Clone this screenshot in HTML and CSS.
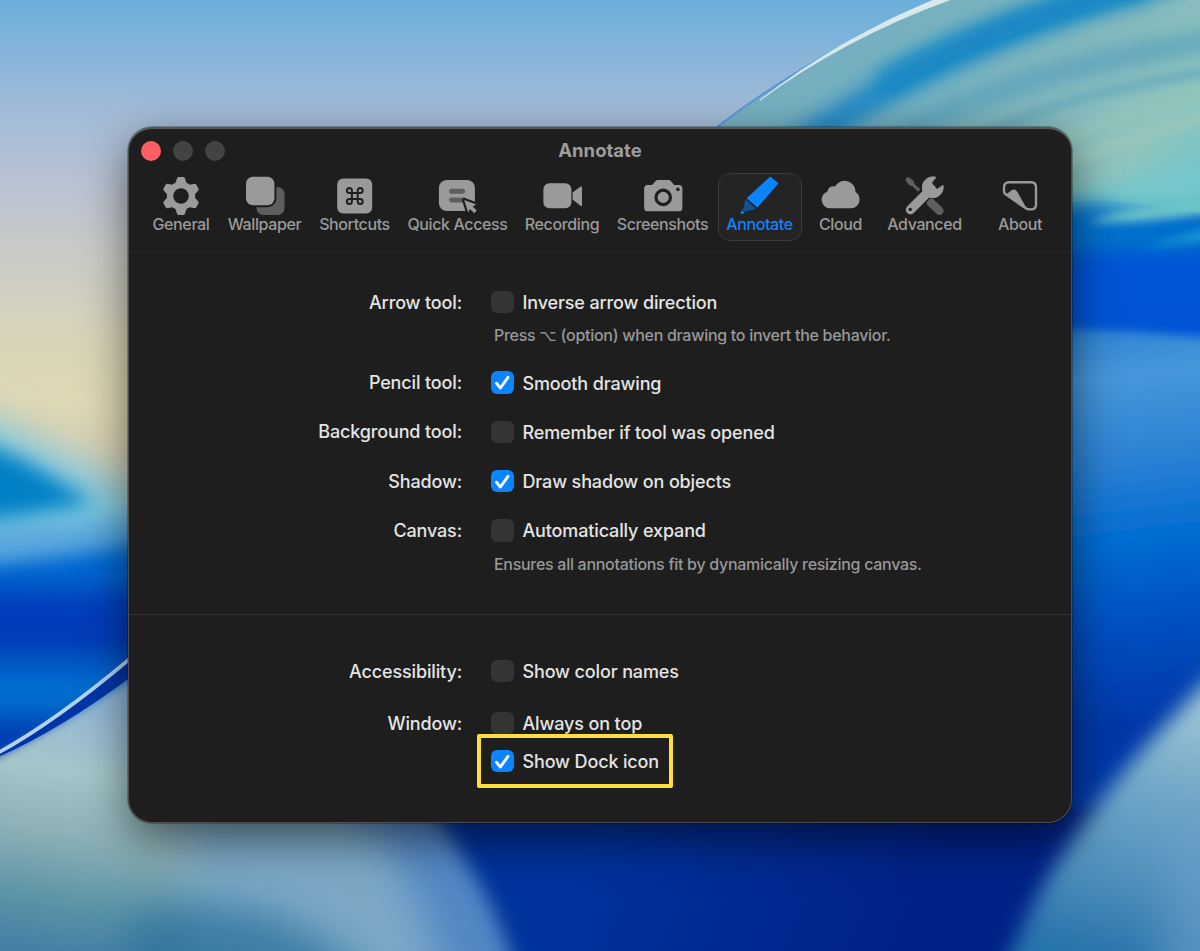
FILE: index.html
```html
<!DOCTYPE html>
<html lang="en">

    <head>
        <meta charset="UTF-8" />
        <meta name="viewport" content="width=device-width, initial-scale=1.0" />
        <title>Annotate</title>
        <link rel="stylesheet" href="styles.css">
    </head>

    <body>

        <svg class="wallpaper" viewBox="0 0 1200 951" preserveAspectRatio="none">
            <defs>
                <linearGradient id="sky" x1="0" y1="0" x2="0" y2="1">
                    <stop offset="0" stop-color="#6bafda" />
                    <stop offset="0.05" stop-color="#84b4da" />
                    <stop offset="0.12" stop-color="#a3bbd7" />
                    <stop offset="0.19" stop-color="#b8c2d2" />
                    <stop offset="0.26" stop-color="#c9cac9" />
                    <stop offset="0.36" stop-color="#d9d4b8" />
                    <stop offset="0.42" stop-color="#dfd8b4" />
                    <stop offset="0.5" stop-color="#d8cdb2" />
                    <stop offset="1" stop-color="#d8cdb2" />
                </linearGradient>
                <linearGradient id="leftBlue" gradientUnits="userSpaceOnUse" x1="0" y1="530" x2="0" y2="750">
                    <stop offset="0.2" stop-color="#0068d2" />
                    <stop offset="0.33" stop-color="#003cba" />
                    <stop offset="0.42" stop-color="#003fbe" />
                    <stop offset="0.5" stop-color="#0038b4" />
                    <stop offset="0.62" stop-color="#005cc8" />
                    <stop offset="0.76" stop-color="#0074d0" />
                    <stop offset="0.9" stop-color="#0044b8" />
                    <stop offset="1" stop-color="#0034a8" />
                </linearGradient>
                <linearGradient id="leftFloor" gradientUnits="userSpaceOnUse" x1="70" y1="690" x2="30" y2="951">
                    <stop offset="0" stop-color="#8fb4d6" />
                    <stop offset="0.3" stop-color="#a6c6ca" />
                    <stop offset="0.55" stop-color="#8bb0b6" />
                    <stop offset="0.8" stop-color="#5c93a6" />
                    <stop offset="1" stop-color="#467ea4" />
                </linearGradient>
                <linearGradient id="rightBlue" gradientUnits="userSpaceOnUse" x1="1110" y1="320" x2="1160" y2="720">
                    <stop offset="0" stop-color="#2c80d4" />
                    <stop offset="0.14" stop-color="#4797da" />
                    <stop offset="0.36" stop-color="#2a80d4" />
                    <stop offset="0.55" stop-color="#006cd2" />
                    <stop offset="0.75" stop-color="#0050c2" />
                    <stop offset="1" stop-color="#0038a8" />
                </linearGradient>
                <linearGradient id="deepBlue" gradientUnits="userSpaceOnUse" x1="600" y1="820" x2="900" y2="951">
                    <stop offset="0" stop-color="#00329c" />
                    <stop offset="1" stop-color="#002288" />
                </linearGradient>
                <linearGradient id="rightFloor" gradientUnits="userSpaceOnUse" x1="1160" y1="690" x2="1090" y2="951">
                    <stop offset="0" stop-color="#9cc6d4" />
                    <stop offset="0.35" stop-color="#74a8c8" />
                    <stop offset="0.7" stop-color="#5090bc" />
                    <stop offset="1" stop-color="#2874ac" />
                </linearGradient>
                <linearGradient id="disc" gradientUnits="userSpaceOnUse" x1="900" y1="20" x2="1150" y2="260">
                    <stop offset="0" stop-color="#76b0c0" />
                    <stop offset="0.45" stop-color="#84b8bd" />
                    <stop offset="0.75" stop-color="#8fc4bd" />
                    <stop offset="1" stop-color="#6cc4cc" />
                </linearGradient>
                <clipPath id="discClip">
                    <path d="M714 130Q820 48 947 -2H1210V350H714Z" />
                </clipPath>
                <filter id="blur1" filterUnits="userSpaceOnUse" x="-100" y="-100" width="1400" height="1200"><feGaussianBlur stdDeviation="0.7" /></filter>
                <filter id="blur4" filterUnits="userSpaceOnUse" x="-100" y="-100" width="1400" height="1200"><feGaussianBlur stdDeviation="5" /></filter>
                <filter id="blur8" filterUnits="userSpaceOnUse" x="-100" y="-100" width="1400" height="1200"><feGaussianBlur stdDeviation="10" /></filter>
                <filter id="blur14" filterUnits="userSpaceOnUse" x="-100" y="-100" width="1400" height="1200"><feGaussianBlur stdDeviation="20" /></filter>
            </defs>

            <rect width="1200" height="951" fill="url(#sky)" />

            <!-- left side -->
            <path d="M-90 385Q20 430 220 535V640H-90Z" fill="#7cc9e0" filter="url(#blur14)" />
            <path d="M-90 525Q60 535 200 505V780H-90Z" fill="#5aa7dd" filter="url(#blur8)" />
            <path d="M-90 408L30 464L94 503L30 514L-90 532Z" fill="#0080c6" filter="url(#blur8)" />
            <path d="M-90 570Q60 566 220 525V800H-90Z" fill="#0068d2" filter="url(#blur8)" />
            <path d="M-90 578Q60 580 220 550V800H-90Z" fill="url(#leftBlue)" filter="url(#blur8)" />

            <!-- middle and right -->
            <path d="M300 700H1200V951H300Z" fill="url(#deepBlue)" />
            <path d="M1000 190H1280V360H1000Z" fill="#0054d4" />
            <path d="M1000 327Q1130 327 1280 345V808H1000Z" fill="url(#rightBlue)" filter="url(#blur4)" />

            <g clip-path="url(#discClip)">
                <path d="M700 -80H1280V232Q1120 190 1060 205L700 240Z" fill="url(#disc)" />
                <path d="M780 160Q930 45 1150 -18" fill="none" stroke="#1f88c6" stroke-width="28" filter="url(#blur8)" />
                <path d="M880 84Q990 22 1180 -22" fill="none" stroke="#0784c4" stroke-width="18" filter="url(#blur8)" />
                <path d="M870 150Q1020 60 1280 32" fill="none" stroke="#559fbc" stroke-width="16" filter="url(#blur8)" />
                <path d="M990 132Q1090 84 1280 62" fill="none" stroke="#68abbb" stroke-width="9" filter="url(#blur4)" />
                <path d="M1050 150Q1120 105 1280 84" fill="none" stroke="#90c4bb" stroke-width="12" filter="url(#blur4)" />
                <path d="M1050 168Q1120 140 1280 96" fill="none" stroke="#98c6bb" stroke-width="12" filter="url(#blur4)" />
                <path d="M1030 196Q1120 190 1280 140V205Q1140 212 1030 230Z" fill="#74c8cc" filter="url(#blur8)" />
                <path d="M1030 206Q1080 204 1110 206Q1120 222 1280 206V262H1030Z" fill="#0070cc" filter="url(#blur8)" />
                <path d="M1086 222Q1150 200 1280 184V200Q1150 226 1086 222Z" fill="#6cc4c8" filter="url(#blur4)" />
                <path d="M1140 250Q1190 232 1280 212V234Q1190 240 1140 250Z" fill="#1ea2d0" filter="url(#blur4)" />
                <path d="M1030 254Q1150 254 1280 252V318H1030Z" fill="#0054d6" filter="url(#blur8)" />
            </g>
            <path d="M717 127Q820 48 947 -2" fill="none" stroke="#5c97dc" stroke-width="2" filter="url(#blur1)" />
            <path d="M760 100Q845 38 949 0L938 -2Q840 38 760 100Z" fill="#d6e9ec" stroke="#d6e9ec" stroke-width="1" filter="url(#blur1)" />

            <!-- bottom shapes -->
            <path d="M100 700H350Q430 800 474 875Q512 935 530 1040H100Z" fill="#5286c4" filter="url(#blur8)" />
            <path d="M-4 757Q50 730 140 673H300V1060H-90V757Z" fill="url(#leftFloor)" filter="url(#blur4)" />
            <path d="M190 780H340Q430 880 460 1040H190Z" fill="#7ba8c6" filter="url(#blur14)" />
            <path d="M130 920Q260 870 370 980V1060H100Z" fill="#2f739c" opacity="0.8" filter="url(#blur14)" />
            <path d="M-4 754Q60 718 132 658V676Q60 730 -4 758Z" fill="#0036a8" filter="url(#blur1)" />
            <path d="M-4 754Q55 722 132 657" fill="none" stroke="#b4d2f2" stroke-width="3.6" filter="url(#blur1)" />
            <path d="M980 1050Q1020 890 1120 776Q1170 714 1280 610V1050Z" fill="url(#rightFloor)" filter="url(#blur8)" />
            <path d="M1180 820L1280 760V1050H1150Z" fill="#6c9cc8" opacity="0.6" filter="url(#blur14)" />
        </svg>

        <div class="window">
            <div class="header">
                <div class="titlebar">
                    <div class="lights">
                        <span class="light close"></span>
                        <span class="light"></span>
                        <span class="light"></span>
                    </div>
                    <h1 class="title">Annotate</h1>
                </div>

                <div class="tabs">
                    <div class="tab">
                        <svg class="icon" viewBox="0 0 40 40">
                            <circle cx="20" cy="20" r="11" fill="none" stroke="currentColor" stroke-width="6.4" />
                            <g fill="currentColor" stroke="currentColor" stroke-width="3" stroke-linejoin="round">
                                <path id="tooth" d="M15.5 8.5L17.6 2.6H22.4L24.5 8.5Z" />
                                <use href="#tooth" transform="rotate(60 20 20)" />
                                <use href="#tooth" transform="rotate(120 20 20)" />
                                <use href="#tooth" transform="rotate(180 20 20)" />
                                <use href="#tooth" transform="rotate(240 20 20)" />
                                <use href="#tooth" transform="rotate(300 20 20)" />
                            </g>
                        </svg>
                        <span class="tab-name">General</span>
                    </div>
                    <div class="tab">
                        <svg class="icon" viewBox="0 0 40 40">
                            <rect class="dim" x="12.5" y="11" width="28" height="28" rx="7" />
                            <rect class="cut" x="2" y="0.8" width="28.4" height="28.4" rx="7" stroke-width="4" />
                            <rect x="2" y="0.8" width="28.4" height="28.4" rx="7" fill="currentColor" />
                        </svg>
                        <span class="tab-name">Wallpaper</span>
                    </div>
                    <div class="tab">
                        <svg class="icon" viewBox="0 0 40 40">
                            <g transform="translate(0.6 0)">
                                <rect x="2.6" y="2.4" width="35" height="35" rx="6" fill="currentColor" />
                                <path class="line" stroke-width="2" d="M17.3 17.1H23.1V22.9H17.3ZM17.3 17.1V14.6A2.5 2.5 0 1 0 14.8 17.1ZM23.1 17.1H25.6A2.5 2.5 0 1 0 23.1 14.6ZM23.1 22.9V25.4A2.5 2.5 0 1 0 25.6 22.9ZM17.3 22.9H14.8A2.5 2.5 0 1 0 17.3 25.4Z" />
                            </g>
                        </svg>
                        <span class="tab-name">Shortcuts</span>
                    </div>
                    <div class="tab">
                        <svg class="icon" viewBox="0 0 40 40">
                            <g transform="translate(0.6 0)">
                                <rect x="1.3" y="4" width="36" height="31" rx="8" fill="currentColor" />
                                <rect class="dim" x="11.5" y="12.8" width="16" height="5" rx="2.5" />
                                <rect class="dim" x="11.5" y="21.6" width="17" height="5" rx="2.5" />
                                <path class="cut" stroke-width="4.4" stroke-linejoin="round" d="M26.6 24L38.6 28.6L35 30.6L39.2 34.6L36.6 37.2L32.4 33L30.6 36.4Z" />
                                <path d="M26.6 24L38.6 28.6L35 30.6L39.2 34.6L36.6 37.2L32.4 33L30.6 36.4Z" fill="currentColor" />
                            </g>
                        </svg>
                        <span class="tab-name">Quick Access</span>
                    </div>
                    <div class="tab">
                        <svg class="icon" viewBox="0 0 40 40">
                            <rect x="1.4" y="7.3" width="28" height="25" rx="6" fill="currentColor" />
                            <path d="M30.6 16.6L38.6 10.6Q40 10 40 11.4V29.2Q40 30.6 38.6 29.8L30.6 23.6Z" fill="currentColor" />
                        </svg>
                        <span class="tab-name">Recording</span>
                    </div>
                    <div class="tab">
                        <svg class="icon" viewBox="0 0 40 40">
                            <g transform="translate(0.6 0)">
                                <path d="M5.2 9H9.5L12.6 5.4Q13.8 4 15.6 4H25.6Q27.4 4 28.6 5.4L31.6 9H36Q39.8 9 39.8 12.8V31.4Q39.8 35.3 36 35.3H5.2Q1.5 35.3 1.5 31.4V12.8Q1.5 9 5.2 9Z" fill="currentColor" />
                                <circle class="line" cx="20.6" cy="21.4" r="7.2" stroke-width="3.2" />
                                <circle class="bg" cx="35.3" cy="13.4" r="1.8" />
                            </g>
                        </svg>
                        <span class="tab-name">Screenshots</span>
                    </div>
                    <div class="tab active">
                        <svg class="icon" viewBox="0 0 40 40">
                            <path d="M30.4 1.2Q31.2 0.4 32 1.2L38.8 6.8Q39.4 7.4 38.8 8.2L18.4 31.6L7.6 22.2Z" fill="currentColor" />
                            <path class="tip" d="M6.6 23.2L17 32.8Q13.4 34.6 10.6 34.6L5.2 36L3.2 34L5 30.4Q5.2 26 6.6 23.2Z" />
                            <path d="M1.4 36.4L3.2 34.6L5.4 36.4L4.2 37.8H2Z" fill="currentColor" />
                        </svg>
                        <span class="tab-name">Annotate</span>
                    </div>
                    <div class="tab">
                        <svg class="icon" viewBox="0 0 40 40">
                            <path d="M9.6 32.3A8.6 8.6 0 0 1 7.4 15.6Q8.6 9.8 15 10.4A11 11 0 0 1 35.6 16Q39.6 18.6 39.6 23.6A8.7 8.7 0 0 1 31 32.3Z" fill="currentColor" />
                        </svg>
                        <span class="tab-name">Cloud</span>
                    </div>
                    <div class="tab">
                        <svg class="icon" viewBox="0 0 40 40">
                            <path class="dim" d="M1.2 3.4L3.8 0.8L9.2 4.2L10.8 8.2L16.4 13.6L14.2 15.8L8.6 10.4L4.8 9Z" />
                            <path class="dim-line" stroke-width="8.4" d="M26.6 26.4L35.4 34.8" />
                            <path class="cut" stroke-width="12" d="M14 26.2L27.2 13" />
                            <path d="M6.4 33.8L27.2 13" stroke="currentColor" stroke-width="9.4" stroke-linecap="round" />
                            <path d="M32 1.4A10.4 10.4 0 1 0 39 9.4L33.4 13.2L28.4 11.2L27.8 6Z" fill="currentColor" stroke="currentColor" stroke-width="1" stroke-linejoin="round" />
                            <circle class="bg" cx="6.2" cy="33.4" r="1.7" />
                        </svg>
                        <span class="tab-name">Advanced</span>
                    </div>
                    <div class="tab">
                        <svg class="icon" viewBox="0 0 40 40">
                            <path d="M9 6.3H31Q36 6.3 36 11.3V28.4Q36 33.4 31 33.4H29.4Q26.6 33.4 24.6 31.4L6 18.6Q4 17.2 4 15V11.3Q4 6.3 9 6.3Z" fill="none" stroke="currentColor" stroke-width="2.4" />
                            <path d="M6 18.6L12 14Q15.4 12.4 17.4 16L27 33L23 31Z" fill="currentColor" />
                        </svg>
                        <span class="tab-name">About</span>
                    </div>
                </div>
            </div>

            <div class="section">
                <div class="row">
                    <span class="label">Arrow tool:</span>
                    <span class="check"></span>
                    <span class="text">Inverse arrow direction</span>
                </div>
                <p class="hint">Press <span class="key">⌥</span> (option) when drawing to invert the behavior.</p>
                <div class="row">
                    <span class="label">Pencil tool:</span>
                    <span class="check on"><svg viewBox="0 0 22 22"><path d="M5.4 12L9.2 16.6L16.6 6.2" /></svg></span>
                    <span class="text">Smooth drawing</span>
                </div>
                <div class="row">
                    <span class="label">Background tool:</span>
                    <span class="check"></span>
                    <span class="text">Remember if tool was opened</span>
                </div>
                <div class="row">
                    <span class="label">Shadow:</span>
                    <span class="check on"><svg viewBox="0 0 22 22"><path d="M5.4 12L9.2 16.6L16.6 6.2" /></svg></span>
                    <span class="text">Draw shadow on objects</span>
                </div>
                <div class="row">
                    <span class="label">Canvas:</span>
                    <span class="check"></span>
                    <span class="text">Automatically expand</span>
                </div>
                <p class="hint">Ensures all annotations fit by dynamically resizing canvas.</p>
            </div>

            <div class="section bottom">
                <div class="row">
                    <span class="label">Accessibility:</span>
                    <span class="check"></span>
                    <span class="text">Show color names</span>
                </div>
                <div class="row">
                    <span class="label">Window:</span>
                    <span class="check"></span>
                    <span class="text">Always on top</span>
                </div>
                <div class="row last">
                    <span class="label"></span>
                    <span class="check on"><svg viewBox="0 0 22 22"><path d="M5.4 12L9.2 16.6L16.6 6.2" /></svg></span>
                    <span class="text">Show Dock icon</span>
                    <span class="marker"></span>
                </div>
            </div>
        </div>

    </body>
</html>
```
FILE: styles.css
```css
body {
    margin: 0;
    height: 951px;
    overflow: hidden;
    background-color: #00329c;
    font-family: Inter, "Liberation Sans", sans-serif;
    color: #e4e4e4;
}
.wallpaper {
    position: absolute;
    top: 0;
    left: 0;
    width: 1200px;
    height: 951px;
}
.window {
    position: relative;
    box-sizing: border-box;
    width: 944px;
    height: 696px;
    margin: 127px 0 0 128px;
    border: 1px solid #4b4d4e;
    border-top: 2px solid #55585a;
    border-radius: 24px;
    background-color: #1e1e1e;
    box-shadow: 0 0 0 1px rgba(0, 0, 0, 0.25), 0 16px 46px rgba(0, 0, 0, 0.55);
}
.header {
    box-sizing: border-box;
    height: 123px;
    border-bottom: 1px solid #262626;
}
.titlebar {
    display: grid;
    grid-template-columns: 200px 1fr 200px;
    align-items: center;
    height: 44px;
}
.lights {
    display: flex;
    gap: 12.3px;
    padding-left: 11.5px;
}
.light {
    width: 20px;
    height: 20px;
    border-radius: 50%;
    background-color: #434343;
}
.close {
    background-color: #ff5f63;
}
.title {
    margin: -2px 0 0;
    font-size: 18.5px;
    line-height: 24px;
    font-weight: 700;
    text-align: center;
    color: #9c9c9c;
}
.tabs {
    display: grid;
    grid-template-columns: 75px 92px 88px 118px 91px 110px 84px 78px 90px 101px;
    padding-left: 14.5px;
}
.tab {
    box-sizing: border-box;
    display: flex;
    flex-direction: column;
    align-items: center;
    height: 68px;
    padding-top: 2px;
    border: 1px solid transparent;
    border-radius: 12px;
    color: #9a9a9a;
}
.active {
    border-color: #3a3a3a;
    background-color: #242424;
    color: #0a84ff;
}
.icon {
    position: relative;
    left: -0.5px;
    width: 40px;
    height: 40px;
    overflow: visible;
}
.dim {
    fill: #5e5e5e;
}
.dim-line {
    stroke: #5e5e5e;
    stroke-linecap: round;
}
.cut {
    fill: #1e1e1e;
    stroke: #1e1e1e;
}
.line {
    fill: none;
    stroke: #1e1e1e;
}
.bg {
    fill: #1e1e1e;
}
.tip {
    fill: #11518f;
}
.tab-name {
    margin-top: -1px;
    font-size: 16px;
    line-height: 18px;
    font-weight: 500;
    letter-spacing: -0.38px;
    white-space: nowrap;
}
.section {
    padding-top: 39px;
    height: 323px;
    border-bottom: 1px solid #353535;
}
.bottom {
    padding-top: 45px;
    height: auto;
    border-bottom: 0;
}
.row {
    position: relative;
    display: flex;
    align-items: center;
    height: 22px;
    margin-bottom: 27.3px;
    font-size: 18px;
    font-weight: 450;
    letter-spacing: -0.14px;
}
.label {
    width: 333px;
    margin-right: 29px;
    text-align: right;
}
.check {
    width: 22.5px;
    height: 22.5px;
    margin-right: 9px;
    border-radius: 6px;
    background-color: #343434;
}
.on {
    background-color: #0a84ff;
}
.check svg {
    display: block;
}
.check path {
    fill: none;
    stroke: #ffffff;
    stroke-width: 2.8;
    stroke-linecap: round;
    stroke-linejoin: round;
}
.text {
    position: relative;
    top: 0.5px;
}
.hint {
    margin: -15px 0 25.3px 365px;
    font-size: 16px;
    line-height: 20px;
    font-weight: 450;
    letter-spacing: -0.29px;
    color: #989898;
}
.key {
    font-family: "DejaVu Sans", sans-serif;
    font-size: 15px;
    letter-spacing: 0;
}
.bottom .row {
    margin-bottom: 30px;
}
.bottom .last {
    margin-top: -14px;
}
.marker {
    position: absolute;
    top: -16px;
    left: 348px;
    box-sizing: border-box;
    width: 196px;
    height: 54px;
    border: 4px solid #ffdf3d;
    border-radius: 2px;
}
```
